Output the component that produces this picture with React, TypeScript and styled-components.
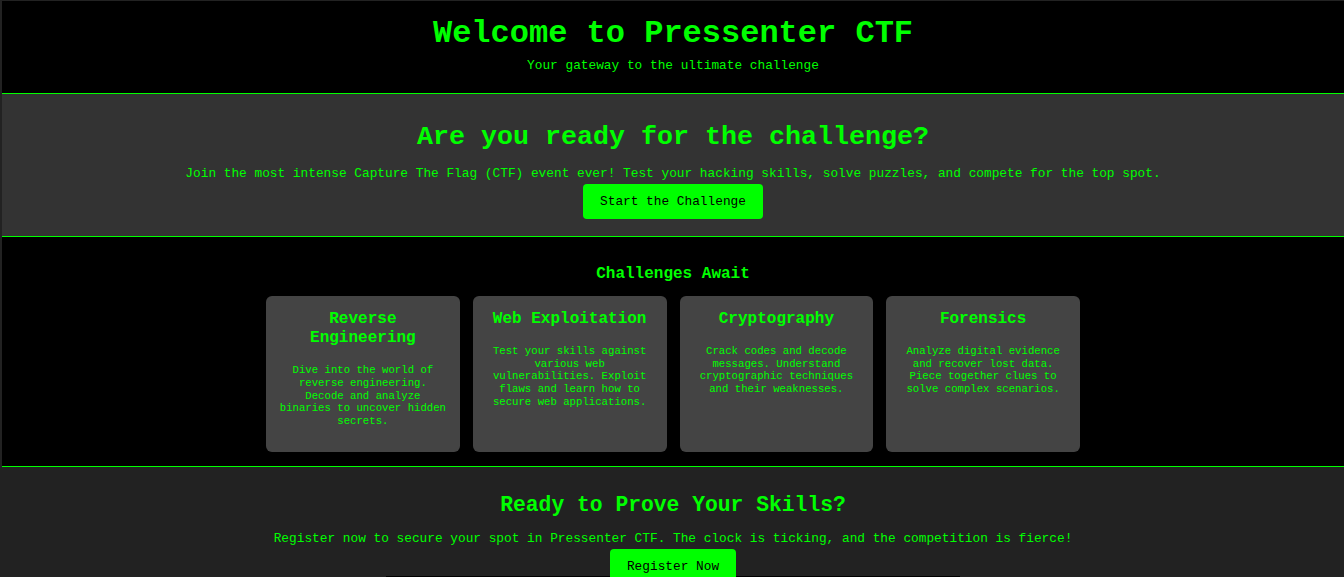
import React from "react";
import styled, { createGlobalStyle } from "styled-components";

const GlobalStyle = createGlobalStyle`
  html, body { margin: 0; padding: 0; background: #222; }
  body {
    padding: 1px 0 0 2px;
    font-family: "Liberation Mono", "Courier New", monospace;
    color: #00ff00;
    line-height: 1.2;
  }
  * { box-sizing: border-box; }
`;

const Page = styled.div`
  background: #000;
`;

const Header = styled.header`
  background: #000;
  text-align: center;
  padding: 14.3px 20px 19.7px;
  border-bottom: 1px solid #00ff00;
`;

const Title = styled.h1`
  margin: 0;
  font-size: 32px;
  font-weight: 700;
`;

const Tagline = styled.p`
  margin: 4.2px 0 0;
  font-size: 12.8px;
`;

const Band = styled.section<{ $bg: string; $pt: number; $pb: number; $line?: boolean }>`
  background: ${(p) => p.$bg};
  padding: ${(p) => p.$pt}px 20px ${(p) => p.$pb}px;
  text-align: center;
  border-bottom: ${(p) => (p.$line ? "1px solid #00ff00" : "none")};
`;

const BandTitle = styled.h2<{ $size: number }>`
  margin: 0;
  font-size: ${(p) => p.$size}px;
  font-weight: 700;
`;

const BandText = styled.p<{ $top: number; $bottom: number }>`
  margin: ${(p) => p.$top}px 0 ${(p) => p.$bottom}px;
  font-size: 12.8px;
`;

const ButtonRow = styled.div`
  font-size: 12.8px;
`;

const Cta = styled.a`
  display: inline;
  padding: 10px 17px;
  background: #00ff00;
  color: #000;
  border-radius: 4px;
  text-decoration: none;
  font-size: 12.8px;
  cursor: pointer;
`;

const SectionTitle = styled.h2`
  margin: 0 0 11.8px;
  font-size: 16px;
  font-weight: 700;
`;

const CardGrid = styled.div`
  display: grid;
  grid-template-columns: repeat(4, 193.75px);
  column-gap: 13px;
  justify-content: center;
`;

const Card = styled.div`
  background: #444;
  border-radius: 6px;
  padding: 14.3px 13px 13.13px;
  text-align: center;
`;

const CardTitle = styled.h3`
  margin: 0 0 15.5px;
  font-size: 16px;
  font-weight: 700;
`;

const CardText = styled.p`
  margin: 0 0 10.67px;
  font-size: 10.67px;
`;

const FormBox = styled.div`
  width: 574px;
  height: 120px;
  margin: 1.8px auto 0;
  background: #000;
`;

const challenges = [
  {
    title: "Reverse Engineering",
    text: "Dive into the world of reverse engineering. Decode and analyze binaries to uncover hidden secrets.",
  },
  {
    title: "Web Exploitation",
    text: "Test your skills against various web vulnerabilities. Exploit flaws and learn how to secure web applications.",
  },
  {
    title: "Cryptography",
    text: "Crack codes and decode messages. Understand cryptographic techniques and their weaknesses.",
  },
  {
    title: "Forensics",
    text: "Analyze digital evidence and recover lost data. Piece together clues to solve complex scenarios.",
  },
];

export default function App() {
  return (
    <>
      <GlobalStyle />
      <Page>
        <Header>
          <Title>Welcome to Pressenter CTF</Title>
          <Tagline>Your gateway to the ultimate challenge</Tagline>
        </Header>

        <Band $bg="#333" $pt={27} $pb={26.3} $line>
          <BandTitle $size={26.67}>Are you ready for the challenge?</BandTitle>
          <BandText $top={13.5} $bottom={12.5}>
            Join the most intense Capture The Flag (CTF) event ever! Test your hacking skills, solve puzzles, and compete for the top spot.
          </BandText>
          <ButtonRow>
            <Cta href="#">Start the Challenge</Cta>
          </ButtonRow>
        </Band>

        <Band $bg="#000" $pt={28} $pb={14} $line>
          <SectionTitle>Challenges Await</SectionTitle>
          <CardGrid>
            {challenges.map((c) => (
              <Card key={c.title}>
                <CardTitle>{c.title}</CardTitle>
                <CardText>{c.text}</CardText>
              </Card>
            ))}
          </CardGrid>
        </Band>

        <Band $bg="#222" $pt={26.2} $pb={20}>
          <BandTitle $size={21.33}>Ready to Prove Your Skills?</BandTitle>
          <BandText $top={12.4} $bottom={12.4}>
            Register now to secure your spot in Pressenter CTF. The clock is ticking, and the competition is fierce!
          </BandText>
          <ButtonRow>
            <Cta href="#">Register Now</Cta>
          </ButtonRow>
          <FormBox />
        </Band>
      </Page>
    </>
  );
}
